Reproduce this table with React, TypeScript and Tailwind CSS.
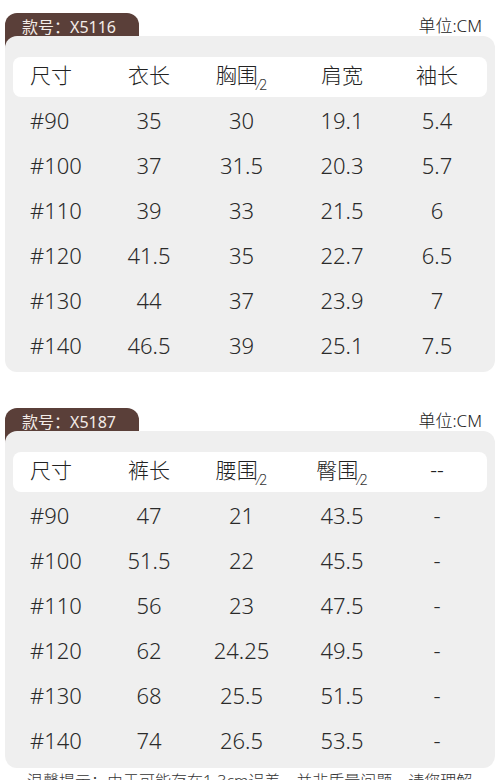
const FONT = { fontFamily: '"Noto Sans", "Noto Sans CJK SC", sans-serif' };

type Table = {
  code: string;
  heads: { label: string; half?: boolean }[];
  rows: string[][];
};

const TABLES: Table[] = [
  {
    code: "X5116",
    heads: [
      { label: "尺寸" },
      { label: "衣长" },
      { label: "胸围", half: true },
      { label: "肩宽" },
      { label: "袖长" },
    ],
    rows: [
      ["#90", "35", "30", "19.1", "5.4"],
      ["#100", "37", "31.5", "20.3", "5.7"],
      ["#110", "39", "33", "21.5", "6"],
      ["#120", "41.5", "35", "22.7", "6.5"],
      ["#130", "44", "37", "23.9", "7"],
      ["#140", "46.5", "39", "25.1", "7.5"],
    ],
  },
  {
    code: "X5187",
    heads: [
      { label: "尺寸" },
      { label: "裤长" },
      { label: "腰围", half: true },
      { label: "臀围", half: true },
      { label: "--" },
    ],
    rows: [
      ["#90", "47", "21", "43.5", "-"],
      ["#100", "51.5", "22", "45.5", "-"],
      ["#110", "56", "23", "47.5", "-"],
      ["#120", "62", "24.25", "49.5", "-"],
      ["#130", "68", "25.5", "51.5", "-"],
      ["#140", "74", "26.5", "53.5", "-"],
    ],
  },
];

// Shared column track: first column is left-aligned, the rest centred.
const COLS = "grid grid-cols-[87px_98px_87px_114px_76px]";

function Cell({ i, children }: { i: number; children: React.ReactNode }) {
  return (
    <div className={i === 0 ? "pl-[17px] text-left" : "text-center"}>
      {children}
    </div>
  );
}

function SizeTable({ t, first }: { t: Table; first: boolean }) {
  return (
    <section className={first ? "" : "mt-[36px]"}>
      <div className="flex items-start justify-between">
        <div className="h-[35px] w-[134px] rounded-t-[12px] bg-[#5a3f39] pl-[17px] pt-[3px] text-[16px] leading-[22px] text-[#f3ece8]">
          款号：{t.code}
        </div>
        <div className="mr-[13px] pt-[3px] text-[17px] font-light leading-[20px] text-[#222]">
          单位:CM
        </div>
      </div>
      <div
        className={`relative -mt-[12px] rounded-[12px] bg-[#efefef] px-[8px] pt-[21px] ${first ? "pb-[3px]" : "pb-[4px]"}`}
      >
        <div className={`${COLS} h-[40px] items-center rounded-[8px] bg-white`}>
          {t.heads.map((h, i) => (
            <Cell key={i} i={i}>
              <span className="text-[21px] font-light leading-none text-[#222]">
                {h.label}
                {h.half && (
                  <span className="inline-block translate-y-[7px] text-[14px] text-[#333]">
                    ⁄2
                  </span>
                )}
              </span>
            </Cell>
          ))}
        </div>
        <div className="mt-[2px]">
          {t.rows.map((r) => (
            <div key={r[0]} className={`${COLS} h-[45px] items-center`}>
              {r.map((v, i) => (
                <Cell key={i} i={i}>
                  <span className="text-[22px] font-light leading-none text-[#2a2a2a]">
                    {v}
                  </span>
                </Cell>
              ))}
            </div>
          ))}
        </div>
      </div>
    </section>
  );
}

export default function App() {
  return (
    <div
      className="h-[780px] w-[500px] overflow-hidden bg-white px-[5px] pt-[13px]"
      style={FONT}
    >
      {TABLES.map((t, i) => (
        <SizeTable key={t.code} t={t} first={i === 0} />
      ))}
      <p className="mt-[3px] whitespace-nowrap pl-[22px] text-[16px] font-light leading-[20px] text-[#333]">
        温馨提示：由于可能存在1-3cm误差，并非质量问题，请您理解
      </p>
    </div>
  );
}
